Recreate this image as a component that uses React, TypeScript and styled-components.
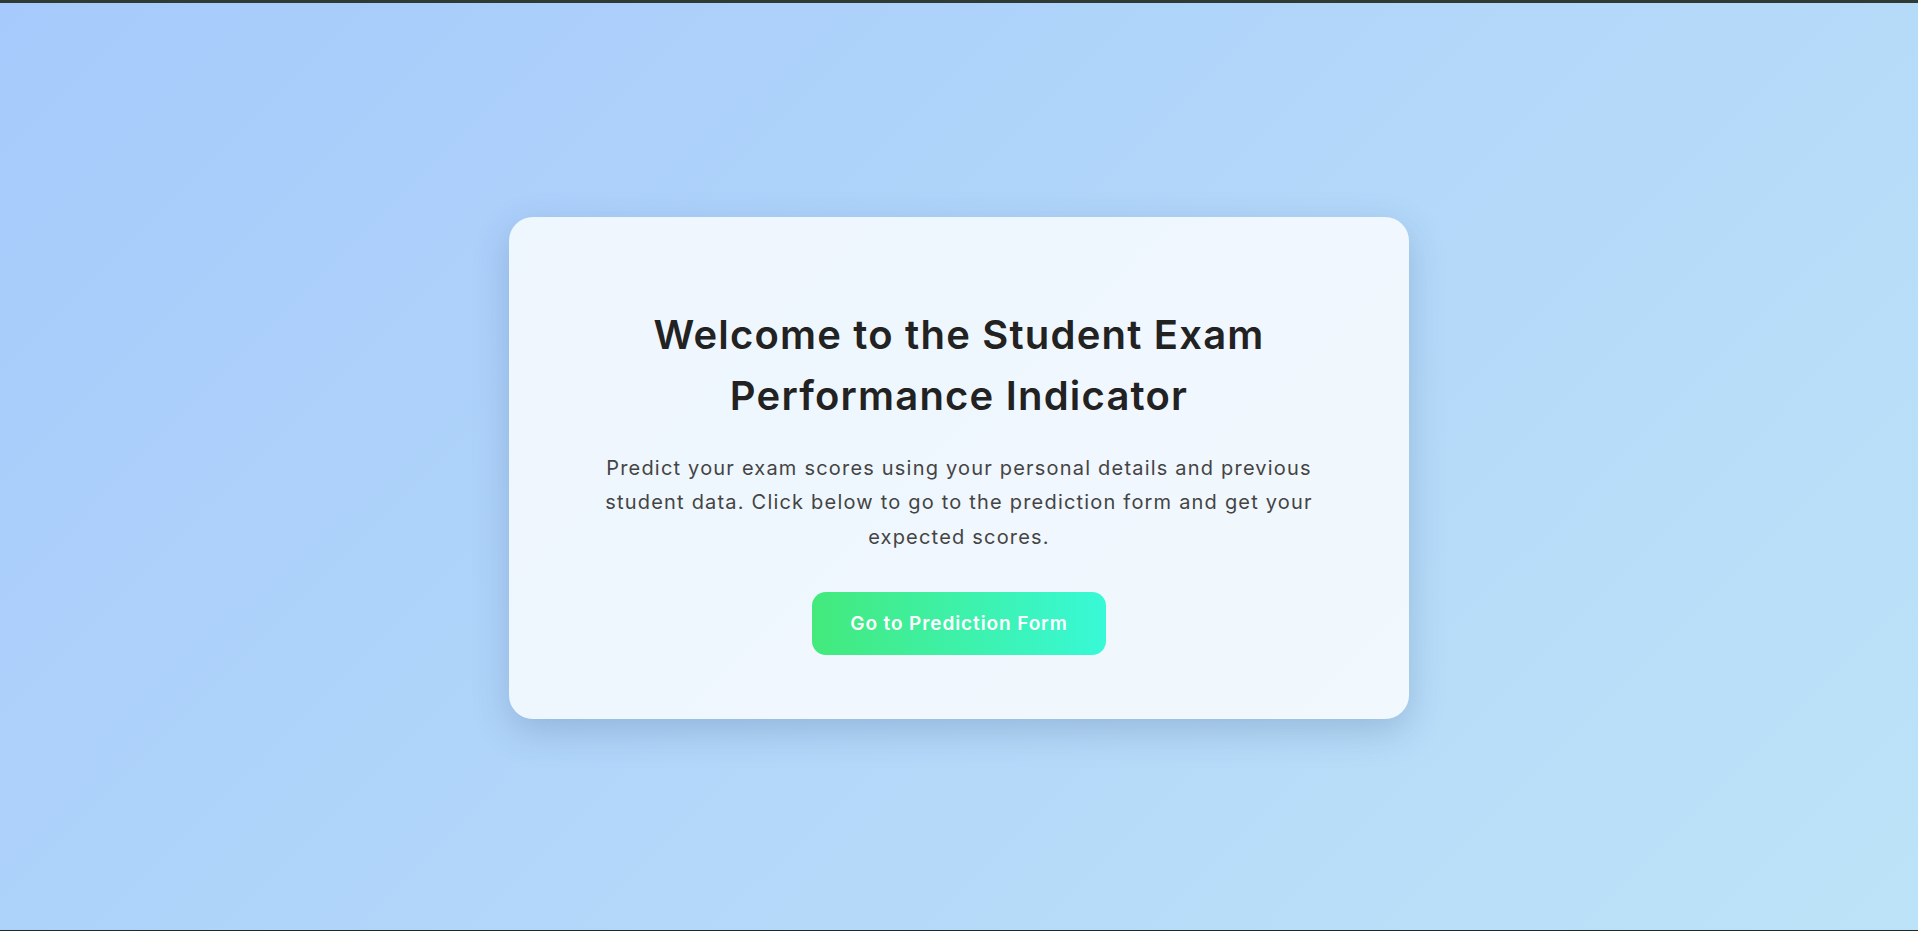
import React from 'react';
import styled, { createGlobalStyle } from 'styled-components';

const GlobalStyle = createGlobalStyle`
  * {
    box-sizing: border-box;
  }

  html, body {
    margin: 0;
    padding: 0;
    height: 100%;
  }

  body {
    font-family: Inter, "Noto Sans", "Open Sans", sans-serif;
    overflow: hidden;
  }

  #root {
    height: 100%;
  }
`;

const Page = styled.div`
  display: flex;
  flex-direction: column;
  height: 100vh;
  background: #2e3a31;
`;

const TopStrip = styled.div`
  height: 3px;
  flex-shrink: 0;
  background: #2f3b32;
`;

const Main = styled.main`
  flex: 1;
  display: flex;
  align-items: center;
  justify-content: center;
  background: linear-gradient(135deg, #a6cafb 0%, #bde3f8 100%);
`;

const BottomLine = styled.div`
  height: 1px;
  flex-shrink: 0;
  background: #1f2a26;
`;

const Card = styled.section`
  width: 900px;
  padding: 60px 80px 64px;
  margin-top: 3px;
  background: rgba(255, 255, 255, 0.8);
  border-radius: 24px;
  box-shadow: 0 12px 36px rgba(40, 70, 120, 0.22);
  text-align: center;
`;

const Title = styled.h1`
  margin: 27px auto 25px;
  max-width: 660px;
  font-size: 40px;
  line-height: 61px;
  font-weight: 600;
  color: #222222;
  letter-spacing: 1.2px;
`;

const Description = styled.p`
  margin: 0 auto 38px;
  max-width: 724px;
  font-size: 20px;
  line-height: 34.5px;
  font-weight: 400;
  color: #444444;
  letter-spacing: 1.2px;
`;

const PrimaryButton = styled.button`
  width: 294px;
  height: 63px;
  border: none;
  border-radius: 14px;
  background: linear-gradient(90deg, #43e97b 0%, #38f9d7 100%);
  color: #ffffff;
  font-family: inherit;
  font-size: 19px;
  font-weight: 600;
  letter-spacing: 0.9px;
  cursor: pointer;
  transition: transform 0.2s ease;

  &:hover {
    transform: translateY(-2px);
  }
`;

export default function App() {
  return (
    <Page>
      <GlobalStyle />
      <TopStrip />
      <Main>
        <Card>
          <Title>Welcome to the Student Exam Performance Indicator</Title>
          <Description>
            Predict your exam scores using your personal details and previous
            student data. Click below to go to the prediction form and get your
            expected scores.
          </Description>
          <PrimaryButton>Go to Prediction Form</PrimaryButton>
        </Card>
      </Main>
      <BottomLine />
    </Page>
  );
}
